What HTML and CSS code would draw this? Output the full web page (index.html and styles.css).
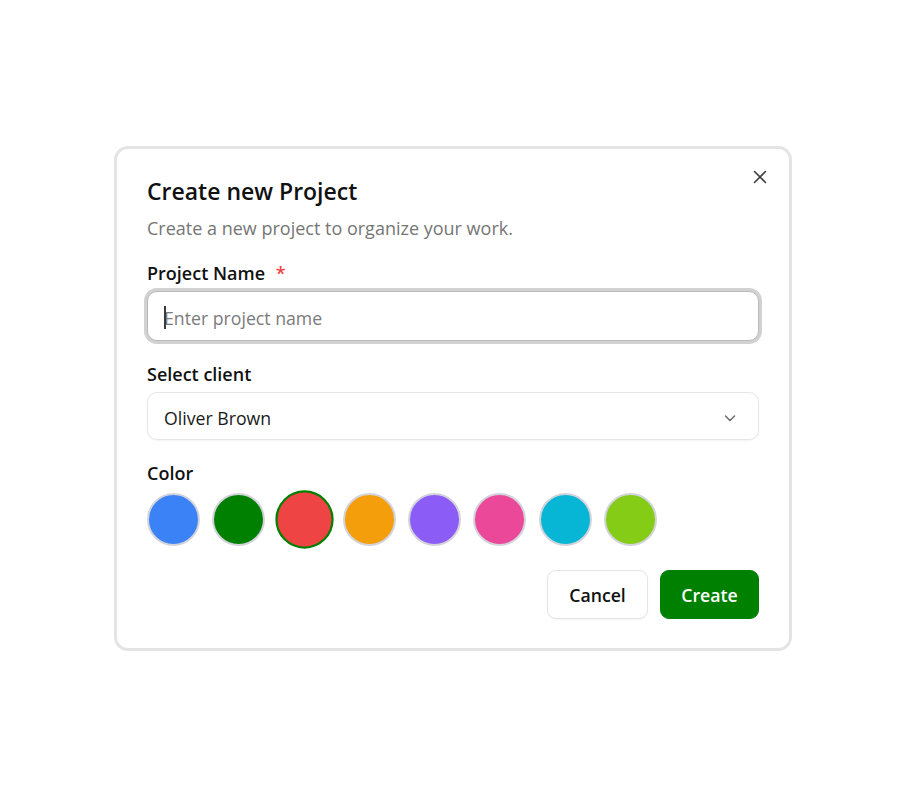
FILE: index.html
```html
<!DOCTYPE html>
<html lang="en">
<head>
<meta charset="utf-8">
<title>Create new Project</title>
<link rel="stylesheet" href="styles.css">
</head>
<body>
<div class="overlay">
  <div class="dialog" role="dialog" aria-labelledby="dlg-title">
    <button class="close" aria-label="Close">
      <svg width="14" height="14" viewBox="0 0 14 14" fill="none" stroke="#3f3f3f" stroke-width="1.6" stroke-linecap="round"><path d="M1.5 1.5L12.5 12.5M12.5 1.5L1.5 12.5"/></svg>
    </button>
    <h2 class="title" id="dlg-title">Create new Project</h2>
    <p class="subtitle">Create a new project to organize your work.</p>

    <label class="label first" for="pname">Project Name <span class="req">*</span></label>
    <div class="input-wrap">
      <input id="pname" class="input" type="text" placeholder="Enter project name">
      <span class="caret"></span>
    </div>

    <label class="label" for="client">Select client</label>
    <div class="select">
      <span class="select-value">Oliver Brown</span>
      <svg class="chevron" width="16" height="16" viewBox="0 0 16 16" fill="none" stroke="#6b6b6b" stroke-width="1.5" stroke-linecap="round" stroke-linejoin="round"><path d="M3.5 6l4.5 4.5L12.5 6"/></svg>
    </div>

    <div class="label">Color</div>
    <div class="swatches">
      <span class="swatch blue"></span>
      <span class="swatch green"></span>
      <span class="swatch red selected"></span>
      <span class="swatch orange"></span>
      <span class="swatch purple"></span>
      <span class="swatch pink"></span>
      <span class="swatch cyan"></span>
      <span class="swatch lime"></span>
    </div>

    <div class="actions">
      <button class="btn btn-cancel">Cancel</button>
      <button class="btn btn-create">Create</button>
    </div>
  </div>
</div>
</body>
</html>
```

FILE: styles.css
```css
* { box-sizing: border-box; }

html, body {
  margin: 0;
  padding: 0;
  background: #ffffff;
}

body {
  font-family: "Open Sans", "Noto Sans", "Liberation Sans", sans-serif;
  color: #111111;
}

.overlay {
  min-height: 100vh;
  display: flex;
  align-items: center;
  justify-content: center;
}

.dialog {
  position: relative;
  width: 678px;
  border: 3px solid #e4e4e4;
  border-radius: 14px;
  background: #ffffff;
  padding: 27px 30px 29px 30px;
  display: flex;
  flex-direction: column;
}

.close {
  position: absolute;
  top: 18px;
  right: 19px;
  width: 20px;
  height: 20px;
  padding: 0;
  border: 0;
  background: transparent;
  display: flex;
  align-items: center;
  justify-content: center;
  cursor: pointer;
}

.title {
  margin: 0;
  font-size: 23px;
  line-height: 30px;
  font-weight: 600;
  color: #111111;
}

.subtitle {
  margin: 9px 0 0;
  font-size: 18px;
  line-height: 26px;
  color: #767676;
}

.label {
  display: block;
  margin-top: 21px;
  font-size: 18px;
  line-height: 24px;
  font-weight: 600;
  color: #111111;
}

.label.first { margin-top: 20px; }

.req {
  color: #ef4444;
  margin-left: 6px;
  font-weight: 600;
}

.input-wrap {
  position: relative;
  margin-top: 6px;
}

.input {
  display: block;
  width: 100%;
  height: 50px;
  border: 1px solid #b9b9b9;
  border-radius: 10px;
  box-shadow: 0 0 0 3px #d2d2d2;
  padding: 3px 16px 0;
  font-family: inherit;
  font-size: 17.7px;
  color: #111111;
  background: #ffffff;
  outline: none;
}

.input::placeholder { color: #7b7b7b; }

.caret {
  position: absolute;
  left: 17px;
  top: 15px;
  width: 1.5px;
  height: 23px;
  background: #3a3a3a;
}

.select {
  margin-top: 6px;
  height: 48px;
  border: 1px solid #e6e6e6;
  border-radius: 10px;
  box-shadow: 0 1px 2px rgba(0, 0, 0, 0.05);
  padding: 3px 20px 0 16px;
  display: flex;
  align-items: center;
  justify-content: space-between;
}

.select-value {
  font-size: 17.7px;
  color: #1a1a1a;
}

.swatches {
  margin-top: 8px;
  display: flex;
  gap: 12.3px;
  align-items: center;
}

.swatch {
  display: block;
  width: 53px;
  height: 53px;
  border-radius: 50%;
  border: 2px solid #d3d3dc;
}

.swatch.selected {
  border: 2.5px solid #008000;
  transform: scale(1.1);
}

.blue { background: #3b82f6; }
.green { background: #008000; }
.red { background: #ef4444; }
.orange { background: #f59e0b; }
.purple { background: #8b5cf6; }
.pink { background: #ec4899; }
.cyan { background: #06b6d4; }
.lime { background: #84cc16; }

.actions {
  margin-top: 24px;
  display: flex;
  justify-content: flex-end;
  gap: 12px;
}

.btn {
  height: 49px;
  border-radius: 9px;
  padding-top: 2px;
  font-family: inherit;
  font-size: 17.7px;
  font-weight: 600;
  cursor: pointer;
}

.btn-cancel {
  width: 101px;
  background: #ffffff;
  border: 1px solid #e4e4e4;
  color: #111111;
  box-shadow: 0 1px 2px rgba(0, 0, 0, 0.04);
}

.btn-create {
  width: 99px;
  background: #008000;
  border: 1px solid #008000;
  color: #ffffff;
}
```
